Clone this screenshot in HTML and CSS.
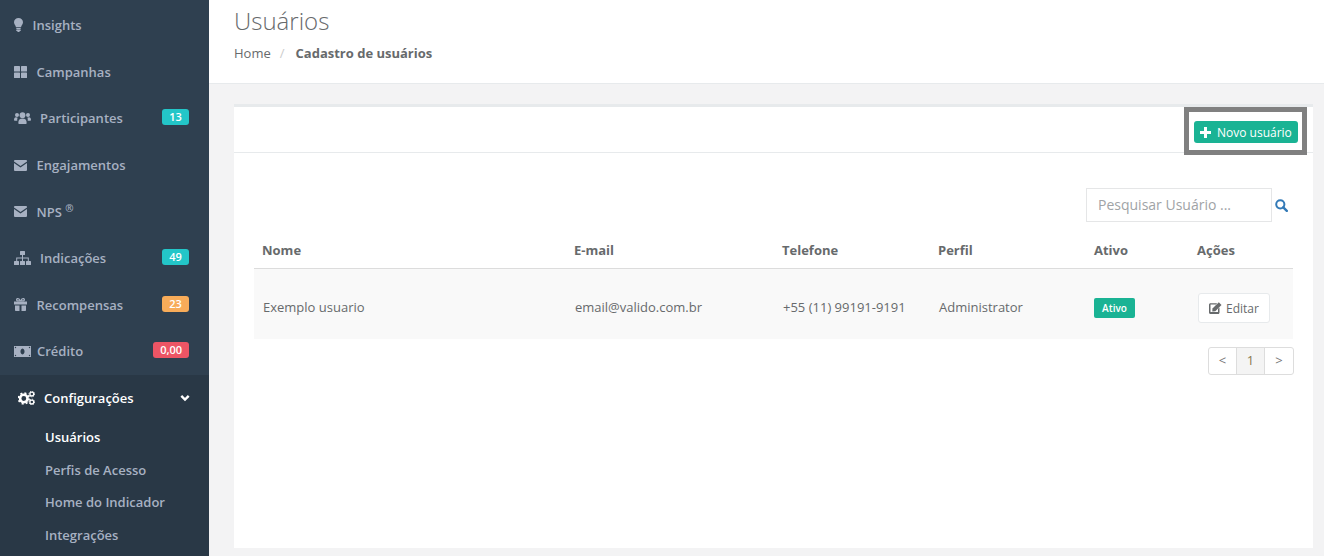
FILE: index.html
```html
<!DOCTYPE html>
<html lang="pt-BR">
<head>
  <meta charset="UTF-8">
  <title>Usuários</title>
  <link rel="stylesheet" href="styles.css">
</head>
<body>
<aside class="sidebar">
  <ul class="nav">
    <li><a href="#">
      <svg class="ico" width="9" height="14" viewBox="0 0 9 14"><path d="M4.5 0C2 0 0 1.8 0 4.3c0 2 1.5 2.9 2 5h5c.5-2.1 2-3 2-5C9 1.8 7 0 4.5 0z"/><rect x="2.2" y="10" width="4.6" height="1.4" rx=".6"/><rect x="2.2" y="11.8" width="4.6" height="1.2" rx=".6"/><rect x="3.3" y="13" width="2.4" height="1" rx=".5"/></svg>
      <span>Insights</span></a></li>
    <li><a href="#">
      <svg class="ico" width="13" height="12" viewBox="0 0 13 12"><rect width="6" height="5.5" rx=".6"/><rect x="7" width="6" height="5.5" rx=".6"/><rect y="6.5" width="6" height="5.5" rx=".6"/><rect x="7" y="6.5" width="6" height="5.5" rx=".6"/></svg>
      <span>Campanhas</span></a></li>
    <li><a href="#">
      <svg class="ico ico-wide" width="17" height="12" viewBox="0 0 17 12"><circle cx="8.5" cy="3.2" r="2.9"/><circle cx="3" cy="3" r="2"/><circle cx="14" cy="3" r="2"/><path d="M4.3 11.2c0-3.4 1.4-4.8 4.2-4.8s4.2 1.4 4.2 4.8c0 .5-.4.8-.9.8H5.2c-.5 0-.9-.3-.9-.8z"/><path d="M3.3 8.800H.8C.3 8.800 0 8.500 0 8c0-1.700.6-2.800 2-2.800.6 0 1.100.2 1.700.5-.6.8-.5 1.900-.4 3.100z"/><path d="M13.700 8.800h2.500c.5 0 .8-.3.8-.8 0-1.700-.6-2.800-2-2.800-.6 0-1.100.2-1.700.5.6.8.5 1.900.4 3.100z"/></svg>
      <span>Participantes</span><em class="badge b-info">13</em></a></li>
    <li><a href="#">
      <svg class="ico" width="13" height="11" viewBox="0 0 13 11"><path d="M.9 0h11.200c.5 0 .9.400.9.900v.6L6.500 6 0 1.500V.9C0 .400.400 0 .900 0z"/><path d="M0 3l6.500 4.500L13 3v7.100c0 .5-.4.900-.9.900H.9c-.5 0-.9-.4-.9-.9z"/></svg>
      <span>Engajamentos</span></a></li>
    <li><a href="#">
      <svg class="ico" width="13" height="11" viewBox="0 0 13 11"><path d="M.9 0h11.200c.5 0 .9.400.9.900v.6L6.500 6 0 1.500V.9C0 .400.400 0 .900 0z"/><path d="M0 3l6.500 4.500L13 3v7.100c0 .5-.4.900-.9.900H.9c-.5 0-.9-.4-.9-.9z"/></svg>
      <span>NPS <sup>®</sup></span></a></li>
    <li><a href="#">
      <svg class="ico ico-wide" width="17" height="14" viewBox="0 0 17 14"><rect x="6" width="5" height="4" rx=".5"/><rect y="10" width="5" height="4" rx=".5"/><rect x="6" y="10" width="5" height="4" rx=".5"/><rect x="12" y="10" width="5" height="4" rx=".5"/><path d="M8 4h1v2.500h5.800V10h-1V7.500H9V10H8V7.500H3.200V10h-1V6.500H8z"/></svg>
      <span>Indicações</span><em class="badge b-info">49</em></a></li>
    <li><a href="#">
      <svg class="ico" width="13" height="13" viewBox="0 0 13 13"><path d="M0 3.500h13v3H0zM1 7.500h4.500V13H1.800C1.300 13 1 12.700 1 12.200zM7.500 7.500H12v4.700c0 .5-.3.800-.8.800H7.500z"/><path fill-rule="evenodd" d="M3.800 0c1.200 0 2.100.9 2.700 2.300C7.100.9 8 0 9.200 0c1.100 0 1.800.7 1.800 1.700 0 1-.8 1.800-2 1.800H4C2.800 3.500 2 2.700 2 1.700 2 .7 2.700 0 3.800 0zm0 1.200c-.4 0-.6.2-.6.500 0 .4.300.6.800.6h1.400C4.900 1.600 4.400 1.200 3.800 1.200zm5.400 0c-.6 0-1.100.4-1.600 1.100H9c.5 0 .8-.2.800-.6 0-.3-.2-.5-.6-.5z"/></svg>
      <span>Recompensas</span><em class="badge b-warn">23</em></a></li>
    <li><a href="#">
      <svg class="ico ico-money" width="17" height="11" viewBox="0 0 17 11"><path fill-rule="evenodd" d="M0 0h17v11H0zM8.500 2.500a2 3 0 1 0 .01 0z"/><circle cx="1.500" cy="1.500" r=".7" fill="#2f4050"/><circle cx="15.500" cy="1.500" r=".7" fill="#2f4050"/><circle cx="1.500" cy="9.500" r=".7" fill="#2f4050"/><circle cx="15.500" cy="9.500" r=".7" fill="#2f4050"/></svg>
      <span>Crédito</span><em class="badge b-danger">0,00</em></a></li>
    <li class="active">
      <a href="#" class="active-link">
        <svg class="ico" width="17" height="14" viewBox="0 0 17 14"><circle cx="5.800" cy="7.500" r="3.700" fill="none" stroke="#fff" stroke-width="2.600"/><circle cx="5.800" cy="7.500" r="5.300" fill="none" stroke="#fff" stroke-width="1.800" stroke-dasharray="2 2.160"/><circle cx="13.800" cy="3" r="1.900" fill="none" stroke="#fff" stroke-width="1.300"/><circle cx="13.800" cy="11" r="1.900" fill="none" stroke="#fff" stroke-width="1.300"/><circle cx="13.800" cy="3" r="2.800" fill="none" stroke="#fff" stroke-width="1" stroke-dasharray="1.200 1.000"/><circle cx="13.800" cy="11" r="2.800" fill="none" stroke="#fff" stroke-width="1" stroke-dasharray="1.200 1.000"/></svg>
        <span>Configurações</span>
        <svg class="chev" width="10" height="8" viewBox="0 0 10 8"><path d="M1.300 1.800L5 5.500l3.700-3.700" fill="none" stroke="#fff" stroke-width="2.400"/></svg>
      </a>
      <ul class="subnav">
        <li><a href="#" class="current">Usuários</a></li>
        <li><a href="#">Perfis de Acesso</a></li>
        <li><a href="#">Home do Indicador</a></li>
        <li><a href="#">Integrações</a></li>
      </ul>
    </li>
  </ul>
</aside>

<main class="main">
  <header class="page-head">
    <h2>Usuários</h2>
    <div class="crumbs"><a href="#">Home</a><i>/</i><strong>Cadastro de usuários</strong></div>
  </header>

  <section class="content">
    <div class="card">
      <div class="card-title">
        <a href="#" class="btn-new">
          <svg width="11" height="11" viewBox="0 0 11 11"><path d="M4 0h3v4h4v3H7v4H4V7H0V4h4z" fill="#fff"/></svg>
          Novo usuário
        </a>
        <div class="highlight"></div>
      </div>
      <div class="card-body">
        <div class="search">
          <input type="text" placeholder="Pesquisar Usuário ...">
          <svg width="13" height="13" viewBox="0 0 13 13"><circle cx="5.300" cy="5.300" r="4.100" fill="none" stroke="#337ab7" stroke-width="2"/><path d="M8.300 8.300l3.500 3.500" stroke="#337ab7" stroke-width="2.400" stroke-linecap="round"/></svg>
        </div>
        <table class="users">
          <colgroup>
            <col class="c-name"><col class="c-mail"><col class="c-tel"><col class="c-perfil"><col class="c-ativo"><col>
          </colgroup>
          <thead>
            <tr><th>Nome</th><th>E-mail</th><th>Telefone</th><th>Perfil</th><th>Ativo</th><th>Ações</th></tr>
          </thead>
          <tbody>
            <tr>
              <td>Exemplo usuario</td>
              <td>email@valido.com.br</td>
              <td>+55 (11) 99191-9191</td>
              <td>Administrator</td>
              <td class="cell-shift"><span class="label-on">Ativo</span></td>
              <td class="cell-shift"><a href="#" class="btn-edit">
                <svg width="13" height="12" viewBox="0 0 13 12"><path d="M9 6.800V10H1.500V2.500H7L8.200 1.300H1.500C.7 1.300 0 2 0 2.800v7.700c0 .8.7 1.500 1.500 1.500h7.700c.8 0 1.300-.7 1.300-1.500V5.500z" fill="#676a6c"/><path d="M3.500 6.500L9.800.3l2.700 2.600-6.200 6.300-3 .4z" fill="#676a6c"/></svg>
                Editar</a></td>
            </tr>
          </tbody>
        </table>
        <div class="pager">
          <a href="#">&lt;</a><a href="#" class="on">1</a><a href="#">&gt;</a>
        </div>
      </div>
    </div>
  </section>
</main>
</body>
</html>
```

FILE: styles.css
```css
* {
  box-sizing: border-box;
}
html, body {
  height: 556px;
  overflow: hidden;
}
body {
  margin: 0;
  display: flex;
  font-family: "Open Sans", Arial, sans-serif;
  font-size: 13px;
  color: #676a6c;
  background-color: #f3f3f4;
}
a {
  text-decoration: none;
  color: inherit;
}
ul {
  list-style: none;
  margin: 0;
  padding: 0;
}

/* sidebar */
.sidebar {
  width: 209px;
  flex-shrink: 0;
  padding-top: 2px;
  background-color: #2f4050;
}
.nav > li > a {
  display: flex;
  align-items: center;
  height: 46.58px;
  padding: 0 20px 0 14px;
  color: #a7b1c2;
  font-weight: 600;
}
.ico {
  flex-shrink: 0;
  margin-right: 9.5px;
  fill: #a7b1c2;
}
.ico-wide {
  margin-right: 9px;
}
.ico-money {
  margin-right: 6px;
}
.nav sup {
  font-size: 10px;
  line-height: 0;
}
.badge {
  margin-left: auto;
  margin-bottom: 2px;
  min-width: 27px;
  height: 16px;
  padding: 0 7px;
  border-radius: 3px;
  color: #fff;
  font-size: 11px;
  font-style: normal;
  font-weight: 600;
  line-height: 16px;
  text-align: center;
}
.b-info { background-color: #23c6c8; }
.b-warn { background-color: #f8ac59; }
.b-danger { background-color: #ed5565; }
.nav > li.active {
  height: 181px;
  background-color: #293846;
}
.nav > li > a.active-link {
  height: 46px;
  padding: 0 19px 0 18px;
  color: #fff;
}
.active-link .ico {
  margin-right: 9px;
  fill: #fff;
}
.chev {
  margin-left: auto;
}
.subnav {
  padding-top: 0.4px;
}
.subnav a {
  display: block;
  height: 32.6px;
  padding-left: 45px;
  color: #a7b1c2;
  font-weight: 600;
  line-height: 32.6px;
}
.subnav a.current {
  color: #fff;
}

/* main */
.main {
  flex: 1;
  min-width: 0;
}
.page-head {
  height: 84px;
  padding-left: 25px;
  background-color: #fff;
  border-bottom: 1px solid #e7eaec;
}
.page-head h2 {
  margin: 0;
  padding-top: 4px;
  font-size: 24px;
  font-weight: 300;
  line-height: 33px;
}
.crumbs {
  margin-top: 7px;
  line-height: 18px;
}
.crumbs i {
  padding: 0 9px;
  color: #ccc;
  font-style: normal;
}
.crumbs strong {
  margin-left: 2px;
  font-weight: 700;
}
.content {
  padding: 20px 11px 8px 25px;
}
.card {
  height: 444px;
  background-color: #fff;
  border-top: 3px solid #e7eaec;
}
.card-title {
  position: relative;
  display: flex;
  justify-content: flex-end;
  align-items: center;
  height: 46px;
  padding: 5px 15px 0 0;
  border-bottom: 1px solid #e7eaec;
}
.btn-new {
  display: flex;
  align-items: center;
  gap: 6px;
  width: 104px;
  height: 22px;
  padding-left: 6px;
  border-radius: 3px;
  background-color: #1ab394;
  color: #fff;
  font-size: 12px;
}
.highlight {
  position: absolute;
  top: 0;
  right: 6px;
  width: 123px;
  height: 48px;
  border: 5px solid #808080;
}
.card-body {
  padding: 35px 20px 0;
}
.search {
  display: flex;
  align-items: center;
  justify-content: flex-end;
  gap: 3px;
  padding-right: 5px;
}
.search input {
  width: 186px;
  height: 34px;
  padding: 5px 11px 7px;
  border: 1px solid #e5e6e7;
  font-family: inherit;
  font-size: 14px;
  color: #676a6c;
  outline: none;
}
.search input::placeholder {
  color: #a0a3a6;
}
.users {
  width: 1039px;
  margin-top: 10px;
  border-collapse: collapse;
  table-layout: fixed;
}
.c-name { width: 312px; }
.c-mail { width: 208px; }
.c-tel { width: 156px; }
.c-perfil { width: 156px; }
.c-ativo { width: 103px; }
.users th {
  height: 36px;
  padding: 0 8px;
  border-bottom: 1px solid #dcdcdc;
  font-weight: 700;
  text-align: left;
}
.users td {
  height: 71px;
  padding: 7px 9px 0;
  background-color: #f9f9f9;
}
.users td.cell-shift {
  padding-top: 9px;
}
.label-on {
  display: inline-block;
  width: 41px;
  height: 20px;
  margin-left: -1px;
  border-radius: 2px;
  background-color: #1ab394;
  color: #fff;
  font-size: 10px;
  font-weight: 600;
  line-height: 20px;
  text-align: center;
}
.btn-edit {
  display: inline-flex;
  align-items: center;
  gap: 4px;
  width: 72px;
  height: 30px;
  padding-left: 10px;
  border: 1px solid #e7eaec;
  border-radius: 3px;
  background-color: #fff;
  font-size: 12px;
}
.pager {
  display: flex;
  justify-content: flex-end;
  margin: 8px -1px 0 0;
}
.pager a {
  width: 29px;
  height: 28px;
  border: 1px solid #ddd;
  margin-left: -1px;
  color: #777;
  line-height: 25px;
  text-align: center;
}
.pager a:first-child {
  border-radius: 3px 0 0 3px;
}
.pager a:last-child {
  width: 30px;
  border-radius: 0 3px 3px 0;
}
.pager a.on {
  background-color: #f4f4f4;
  color: #8a7a50;
}
```
